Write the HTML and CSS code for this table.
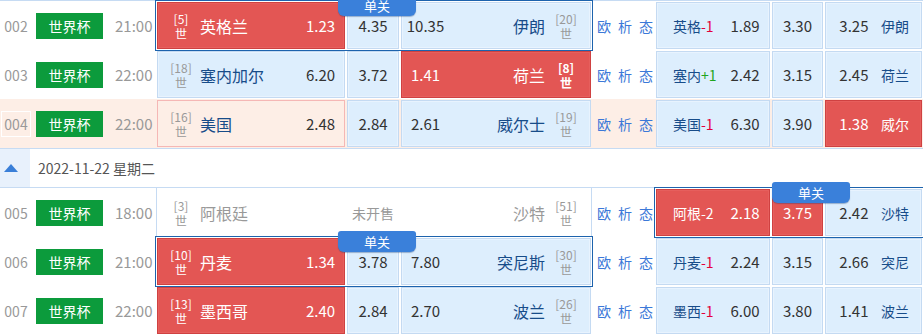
FILE: index.html
```html
<!DOCTYPE html>
<html lang="zh-CN">
<head>
<meta charset="utf-8">
<title>竞彩足球</title>
<link rel="stylesheet" href="styles.css">
</head>
<body>
<div class="board">

  <div class="row">
    <div class="c-num"><span class="num">002</span></div>
    <div class="c-league"><span class="league">世界杯</span></div>
    <div class="c-time">21:00</div>
    <div class="match sel">
      <span class="tab tab-m">单关</span>
      <div class="cell home red"><div class="rank"><span>[5]</span><span>世</span></div><div class="name">英格兰</div><div class="odd">1.23</div></div>
      <div class="cell draw"><div class="odd">4.35</div></div>
      <div class="cell away"><div class="odd">10.35</div><div class="name">伊朗</div><div class="rank"><span>[20]</span><span>世</span></div></div>
    </div>
    <div class="links"><span>欧</span><span>析</span><span>态</span></div>
    <div class="hc">
      <div class="cell h1"><span class="hn">英格<em class="neg">-1</em></span><span class="ho">1.89</span></div>
      <div class="cell d1"><span class="ho">3.30</span></div>
      <div class="cell a1"><span class="ho">3.25</span><span class="hn">伊朗</span></div>
    </div>
  </div>

  <div class="row">
    <div class="c-num"><span class="num">003</span></div>
    <div class="c-league"><span class="league">世界杯</span></div>
    <div class="c-time">22:00</div>
    <div class="match">
      <div class="cell home"><div class="rank"><span>[18]</span><span>世</span></div><div class="name">塞内加尔</div><div class="odd">6.20</div></div>
      <div class="cell draw"><div class="odd">3.72</div></div>
      <div class="cell away red"><div class="odd">1.41</div><div class="name">荷兰</div><div class="rank strong"><span>[8]</span><span>世</span></div></div>
    </div>
    <div class="links"><span>欧</span><span>析</span><span>态</span></div>
    <div class="hc">
      <div class="cell h1"><span class="hn">塞内<em class="pos">+1</em></span><span class="ho">2.42</span></div>
      <div class="cell d1"><span class="ho">3.15</span></div>
      <div class="cell a1"><span class="ho">2.45</span><span class="hn">荷兰</span></div>
    </div>
  </div>

  <div class="row hover">
    <div class="c-num"><span class="num">004</span></div>
    <div class="c-league"><span class="league">世界杯</span></div>
    <div class="c-time">22:00</div>
    <div class="match">
      <div class="cell home pink"><div class="rank"><span>[16]</span><span>世</span></div><div class="name">美国</div><div class="odd">2.48</div></div>
      <div class="cell draw"><div class="odd">2.84</div></div>
      <div class="cell away"><div class="odd">2.61</div><div class="name">威尔士</div><div class="rank"><span>[19]</span><span>世</span></div></div>
    </div>
    <div class="links"><span>欧</span><span>析</span><span>态</span></div>
    <div class="hc">
      <div class="cell h1"><span class="hn">美国<em class="neg">-1</em></span><span class="ho">6.30</span></div>
      <div class="cell d1"><span class="ho">3.90</span></div>
      <div class="cell a1 red"><span class="ho">1.38</span><span class="hn">威尔</span></div>
    </div>
  </div>

  <div class="date">
    <div class="fold"><span class="tri"></span></div>
    <div class="date-text">2022-11-22 星期二</div>
  </div>

  <div class="row">
    <div class="c-num"><span class="num">005</span></div>
    <div class="c-league"><span class="league">世界杯</span></div>
    <div class="c-time">18:00</div>
    <div class="match off">
      <div class="cell home"><div class="rank"><span>[3]</span><span>世</span></div><div class="name">阿根廷</div><div class="odd"></div></div>
      <div class="cell draw"><div class="odd">未开售</div></div>
      <div class="cell away"><div class="odd"></div><div class="name">沙特</div><div class="rank"><span>[51]</span><span>世</span></div></div>
    </div>
    <div class="links"><span>欧</span><span>析</span><span>态</span></div>
    <div class="hc sel">
      <span class="tab tab-h">单关</span>
      <div class="cell h1 red"><span class="hn">阿根-2</span><span class="ho">2.18</span></div>
      <div class="cell d1 red"><span class="ho">3.75</span></div>
      <div class="cell a1"><span class="ho">2.42</span><span class="hn">沙特</span></div>
    </div>
  </div>

  <div class="row">
    <div class="c-num"><span class="num">006</span></div>
    <div class="c-league"><span class="league">世界杯</span></div>
    <div class="c-time">21:00</div>
    <div class="match sel">
      <span class="tab tab-m">单关</span>
      <div class="cell home red"><div class="rank"><span>[10]</span><span>世</span></div><div class="name">丹麦</div><div class="odd">1.34</div></div>
      <div class="cell draw"><div class="odd">3.78</div></div>
      <div class="cell away"><div class="odd">7.80</div><div class="name">突尼斯</div><div class="rank"><span>[30]</span><span>世</span></div></div>
    </div>
    <div class="links"><span>欧</span><span>析</span><span>态</span></div>
    <div class="hc">
      <div class="cell h1"><span class="hn">丹麦<em class="neg">-1</em></span><span class="ho">2.24</span></div>
      <div class="cell d1"><span class="ho">3.15</span></div>
      <div class="cell a1"><span class="ho">2.66</span><span class="hn">突尼</span></div>
    </div>
  </div>

  <div class="row">
    <div class="c-num"><span class="num">007</span></div>
    <div class="c-league"><span class="league">世界杯</span></div>
    <div class="c-time">22:00</div>
    <div class="match">
      <div class="cell home red"><div class="rank"><span>[13]</span><span>世</span></div><div class="name">墨西哥</div><div class="odd">2.40</div></div>
      <div class="cell draw"><div class="odd">2.84</div></div>
      <div class="cell away"><div class="odd">2.70</div><div class="name">波兰</div><div class="rank"><span>[26]</span><span>世</span></div></div>
    </div>
    <div class="links"><span>欧</span><span>析</span><span>态</span></div>
    <div class="hc">
      <div class="cell h1"><span class="hn">墨西<em class="neg">-1</em></span><span class="ho">6.00</span></div>
      <div class="cell d1"><span class="ho">3.80</span></div>
      <div class="cell a1"><span class="ho">1.41</span><span class="hn">波兰</span></div>
    </div>
  </div>

</div>
</body>
</html>
```

FILE: styles.css
```css
* { box-sizing: border-box; margin: 0; padding: 0; }
html, body { width: 923px; height: 334px; overflow: hidden; background: #fff; }
body {
  font-family: "Microsoft YaHei", "Noto Sans CJK SC", "Noto Sans", sans-serif;
  font-size: 14px;
  color: #333;
}
.board { width: 923px; border-top: 1px solid #c6dbf3; }

.row { display: flex; height: 49px; }
.row.hover { background: #fdeee6; }

.c-num { width: 34px; display: flex; align-items: center; }
.num {
  margin-left: 1px; width: 30px; height: 26px; line-height: 24px;
  text-align: center; border: 1px solid transparent; color: #999; font-size: 14px;
}
.hover .num { border-color: #fff; }

.c-league { width: 69px; display: flex; align-items: center; padding-left: 2px; }
.league {
  width: 67px; height: 26px; line-height: 26px; text-align: center;
  background: #0c9b3c; color: #fff; font-size: 14px;
}

.c-time { width: 53px; display: flex; align-items: center; padding-left: 12px; color: #999; font-size: 15px; }

.match { width: 436px; display: flex; gap: 2px; padding: 1px; position: relative; }
.hc { width: 268px; display: flex; gap: 2px; padding: 1px; position: relative; }
.sel { outline: 1px solid #1d63ad; z-index: 1; }

.cell {
  display: flex; align-items: center;
  background: #ddeefd; border: 1px solid #c4daf2;
  box-shadow: inset 0 0 0 1px #e8f3fe;
}
.cell.red { background: #e35654; border-color: #cf4141; box-shadow: inset 0 0 0 1px #e65f5d; color: #fff; }
.cell.pink { background: #fdeee6; border-color: #f5b7b5; box-shadow: none; }

.home { width: 188px; }
.draw { width: 52px; justify-content: center; }
.away { width: 190px; }

.rank { width: 28px; display: flex; flex-direction: column; align-items: center; font-size: 12px; line-height: 15px; color: #999; }
.rank span { display: block; }
.home .rank { margin-left: 9px; }
.away .rank { margin-right: 10px; }
.name { flex: 1; font-size: 16px; color: #174c89; white-space: nowrap; }
.home .name { margin-left: 5px; }
.away .name { text-align: right; margin-right: 7px; }
.odd { font-size: 15px; color: #333; white-space: nowrap; }
.home .odd, .away .odd { width: 47px; text-align: center; }
.red .rank, .red .name, .red .odd { color: #fff; }
.rank.strong { font-weight: bold; }

.off { box-shadow: inset 1px 0 #c6dbf3, inset -1px 0 #c6dbf3; }
.off .cell { background: transparent; border-color: transparent; box-shadow: none; }
.off .name, .off .odd { color: #999; }
.off .draw .odd { font-size: 14px; }

.links { width: 63px; display: flex; align-items: center; padding-left: 5px; gap: 7px; color: #3b78d8; font-size: 14px; }

.h1 { width: 114px; justify-content: space-between; padding: 0 9px 0 16px; }
.d1 { width: 52px; justify-content: center; }
.a1 { width: 97px; justify-content: space-between; padding: 0 12px 0 13px; }
.hn { font-size: 14px; color: #174c89; white-space: nowrap; }
.ho { font-size: 15px; color: #333; }
.red .hn, .red .ho { color: #fff; }
.hn em { font-style: normal; }
.neg { color: #e4003b; }
.pos { color: #1ea51e; }

.tab {
  position: absolute; top: -6px; z-index: 2;
  width: 78px; height: 21px; line-height: 21px; text-align: center;
  background: #3a80da; color: #fff; font-size: 13px;
  border-radius: 3px 3px 6px 6px;
  box-shadow: 0 1px 1px rgba(20, 60, 120, 0.35);
}
.tab-m { left: 182px; }
.tab-h { left: 117px; }

.date { height: 40px; display: flex; border-top: 1px solid #c6dbf3; border-bottom: 1px solid #c6dbf3; }
.fold { width: 30px; background: #e8f1fc; display: flex; align-items: center; padding-left: 4px; }
.tri {
  width: 0; height: 0;
  border-left: 7.5px solid transparent; border-right: 7.5px solid transparent;
  border-bottom: 8px solid #3a7fd8;
}
.date-text { display: flex; align-items: center; padding-left: 8px; color: #555; font-size: 14px; }
```
